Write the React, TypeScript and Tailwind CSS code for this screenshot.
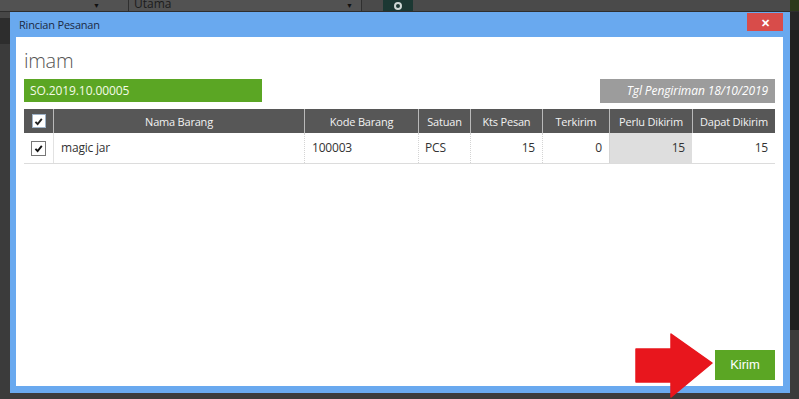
import React from "react";

const headers = [
  { label: "Nama Barang", w: "w-[251px]" },
  { label: "Kode Barang", w: "w-[114px]" },
  { label: "Satuan", w: "w-[52px]" },
  { label: "Kts Pesan", w: "w-[72px]" },
  { label: "Terkirim", w: "w-[67px]" },
  { label: "Perlu Dikirim", w: "w-[83px]" },
  { label: "Dapat Dikirim", w: "w-[83px]" },
];

function Check({ className }: { className?: string }) {
  return (
    <svg viewBox="0 0 10 10" className={className}>
      <path d="M2.2 5.3 L4.2 7.3 L8 2.7" fill="none" stroke="currentColor" strokeWidth="1.7" />
    </svg>
  );
}

function TopBar() {
  return (
    <div className="flex h-[12px] bg-[#4a4a4a] border-b border-[#2e2e2e]">
      <div className="w-[128px] flex justify-end items-center pr-[28px] bg-[#525252]">
        <span className="text-[7px] leading-none text-[#111]">▼</span>
      </div>
      <div className="w-px bg-[#2f2f2f]" />
      <div className="w-[232px] flex items-center justify-between bg-[#525252] overflow-hidden pl-[5px] pr-[8px]">
        <span className="text-[12px] leading-[12px] -mt-[4px] text-[#1c1c1c]">Utama</span>
        <span className="text-[7px] leading-none text-[#111]">▼</span>
      </div>
      <div className="w-px bg-[#2f2f2f]" />
      <div className="w-[21px]" />
      <div className="w-[30px] bg-[#1c3833] flex items-center justify-center">
        <span className="w-[8px] h-[8px] rounded-full border-2 border-[#cfd8d6]" />
      </div>
      <div className="flex-1" />
      <div className="w-[9px] bg-[#2c3a1a]" />
    </div>
  );
}

export default function App() {
  return (
    <div className="relative w-[799px] h-[399px] overflow-hidden bg-[#3b3b3b] font-['Open_Sans',sans-serif]">
      <TopBar />
      <div className="flex">
        <div className="w-[10px] flex flex-col">
          <div className="h-[6px] bg-[#474747]" />
          <div className="h-[26px] bg-[#2d2d2d]" />
        </div>

        {/* modal */}
        <div className="w-[780px] h-[381px] flex flex-col bg-[#69a9ef] pl-[6px] pr-[7px] pb-[7px]">
          <div className="h-[25px] flex items-start justify-between">
            <span className="mt-[6px] ml-[3px] text-[11px] leading-[14px] tracking-[-0.2px] text-[#1b2a44]">Rincian Pesanan</span>
            <button className="mt-px w-[36px] h-[18px] bg-[#d84c4a] flex items-center justify-center">
              <span className="text-white text-[11px] font-bold leading-none">✕</span>
            </button>
          </div>

          <div className="flex-1 bg-white flex flex-col px-[8px]">
            <div className="mt-[10px] h-[28px] text-[20px] leading-[28px] font-light tracking-[-0.3px] text-[#555]">imam</div>
            <div className="mt-[4px] flex justify-between items-start">
              <div className="w-[238px] h-[23px] bg-[#5ba624] text-[12px] leading-[23px] tracking-[-0.1px] text-[#f4fbe6] pl-[6px]">
                SO.2019.10.00005
              </div>
              <div className="w-[175px] h-[24px] bg-[#9c9c9c] text-[12px] leading-[24px] italic tracking-[-0.1px] text-white text-right pr-[7px]">
                Tgl Pengiriman 18/10/2019
              </div>
            </div>

            <div className="mt-[6px] w-[751px] text-[11px] tracking-[-0.2px]">
              <div className="flex h-[24px] bg-[#575757] text-[#f2f2f2]">
                <div className="w-[29px] flex items-center justify-center">
                  <span className="w-[14px] h-[14px] bg-white border border-[#9fb3c8] flex items-center justify-center text-[#222]">
                    <Check className="w-[11px] h-[11px]" />
                  </span>
                </div>
                {headers.map((h) => (
                  <div
                    key={h.label}
                    className={`${h.w} border-l border-[#b9b9b9] flex items-center justify-center leading-none`}
                  >
                    {h.label}
                  </div>
                ))}
              </div>
              <div className="flex h-[31px] border-b border-[#dcdcdc] text-[12px] text-[#333]">
                <div className="w-[29px] flex items-center justify-center">
                  <span className="w-[15px] h-[15px] bg-white border border-[#777] flex items-center justify-center text-[#111]">
                    <Check className="w-[11px] h-[11px]" />
                  </span>
                </div>
                <div className="w-[251px] border-l border-[#e2e2e2] flex items-center px-[7px]">magic jar</div>
                <div className="w-[114px] border-l border-dotted border-[#d4d4d4] flex items-center px-[7px]">100003</div>
                <div className="w-[52px] border-l border-dotted border-[#d4d4d4] flex items-center px-[6px]">PCS</div>
                <div className="w-[72px] border-l border-dotted border-[#d4d4d4] flex items-center justify-end px-[7px]">15</div>
                <div className="w-[67px] border-l border-dotted border-[#d4d4d4] flex items-center justify-end px-[7px]">0</div>
                <div className="w-[83px] border-l border-[#d4d4d4] bg-[#dedede] flex items-center justify-end px-[7px]">15</div>
                <div className="w-[83px] flex items-center justify-end px-[7px]">15</div>
              </div>
            </div>

            <div className="mt-auto mb-[6px] flex justify-end">
              <button className="w-[60px] h-[30px] bg-[#5ba624] text-white text-[13px] font-['Liberation_Sans',sans-serif]">
                Kirim
              </button>
            </div>
          </div>
        </div>

        <div className="w-[9px] flex flex-col">
          <div className="h-[18px] bg-[#262626]" />
          <div className="h-[300px] bg-[#1f1f1f]" />
        </div>
      </div>

      {/* red arrow pointing at Kirim */}
      <svg className="absolute left-[635px] top-[333px] w-[78px] h-[66px]" viewBox="0 0 78 66">
        <polygon points="1,16 36,16 36,1 77,30 36,64 36,49 1,49" fill="#e8161d" stroke="#e8161d" strokeLinejoin="round" strokeWidth="1.5" />
      </svg>
    </div>
  );
}
